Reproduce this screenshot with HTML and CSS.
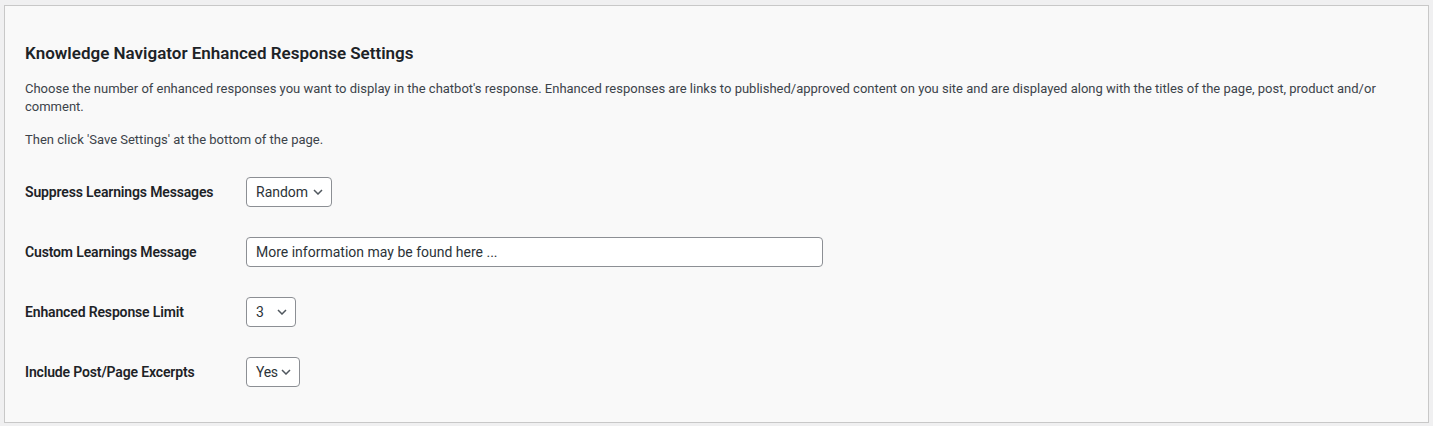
FILE: index.html
```html
<!DOCTYPE html>
<html lang="en">
<head>
<meta charset="utf-8">
<title>Knowledge Navigator Enhanced Response Settings</title>
<link rel="stylesheet" href="styles.css">
</head>
<body>
<div class="panel">
  <h2 class="panel-title">Knowledge Navigator Enhanced Response Settings</h2>
  <p class="panel-text panel-text-first">Choose the number of enhanced responses you want to display in the chatbot's response. Enhanced responses are links to published/approved content on you site and are displayed along with the titles of the page, post, product and/or comment.</p>
  <p class="panel-text panel-text-second">Then click 'Save Settings' at the bottom of the page.</p>
  <div class="form">
    <div class="form-row">
      <div class="form-label">Suppress Learnings Messages</div>
      <div class="select select-random"><span class="select-value">Random</span><svg class="chev" width="10" height="6" viewBox="0 0 10 6"><path d="M1 1 L5 5 L9 1" fill="none" stroke="#50575e" stroke-width="1.5"/></svg></div>
    </div>
    <div class="form-row">
      <div class="form-label">Custom Learnings Message</div>
      <div class="text-input">More information may be found here ...</div>
    </div>
    <div class="form-row">
      <div class="form-label">Enhanced Response Limit</div>
      <div class="select select-limit"><span class="select-value">3</span><svg class="chev" width="10" height="6" viewBox="0 0 10 6"><path d="M1 1 L5 5 L9 1" fill="none" stroke="#50575e" stroke-width="1.5"/></svg></div>
    </div>
    <div class="form-row">
      <div class="form-label">Include Post/Page Excerpts</div>
      <div class="select select-yes"><span class="select-value">Yes</span><svg class="chev" width="10" height="6" viewBox="0 0 10 6"><path d="M1 1 L5 5 L9 1" fill="none" stroke="#50575e" stroke-width="1.5"/></svg></div>
    </div>
  </div>
</div>
</body>
</html>
```

FILE: styles.css
```css
html, body {
  margin: 0;
  padding: 0;
  background: #f0f0f1;
}
body {
  font-family: Roboto, "Liberation Sans", sans-serif;
  color: #3c434a;
  padding: 5px 4px 3px 4px;
}
.panel {
  background: #f9f9f9;
  border: 1px solid #c8c8c8;
  padding: 36px 20px 19px 20px;
  height: 418px;
  box-sizing: border-box;
}
.panel-title {
  margin: 0;
  font-size: 17px;
  line-height: 22px;
  font-weight: 600;
  color: #1d2327;
}
.panel-text {
  margin: 0;
  font-size: 13px;
  line-height: 18.5px;
}
.panel-text-first {
  margin-top: 15.5px;
}
.panel-text-second {
  margin-top: 14.7px;
}
.form {
  margin-top: 12px;
  display: flex;
  flex-direction: column;
}
.form-row {
  display: grid;
  grid-template-columns: 221px 1fr;
  align-items: center;
  height: 60px;
}
.form-label {
  font-size: 14px;
  line-height: 18px;
  font-weight: 600;
  letter-spacing: -0.15px;
  color: #1d2327;
}
.select {
  display: flex;
  align-items: center;
  justify-content: space-between;
  box-sizing: border-box;
  height: 30px;
  padding: 0 8px 0 9px;
  background: #fff;
  border: 1px solid #8c8f94;
  border-radius: 4px;
  font-size: 14px;
  color: #2c3338;
}
.select-random { width: 86px; }
.select-limit { width: 50px; }
.select-yes { width: 54px; }
.select-yes .select-value { letter-spacing: -0.3px; }
.chev {
  display: block;
  margin-top: 1px;
  flex-shrink: 0;
}
.text-input {
  box-sizing: border-box;
  width: 577px;
  height: 30px;
  padding: 0 9px;
  display: flex;
  align-items: center;
  background: #fff;
  border: 1px solid #8c8f94;
  border-radius: 4px;
  font-size: 14px;
  color: #2c3338;
}
```
